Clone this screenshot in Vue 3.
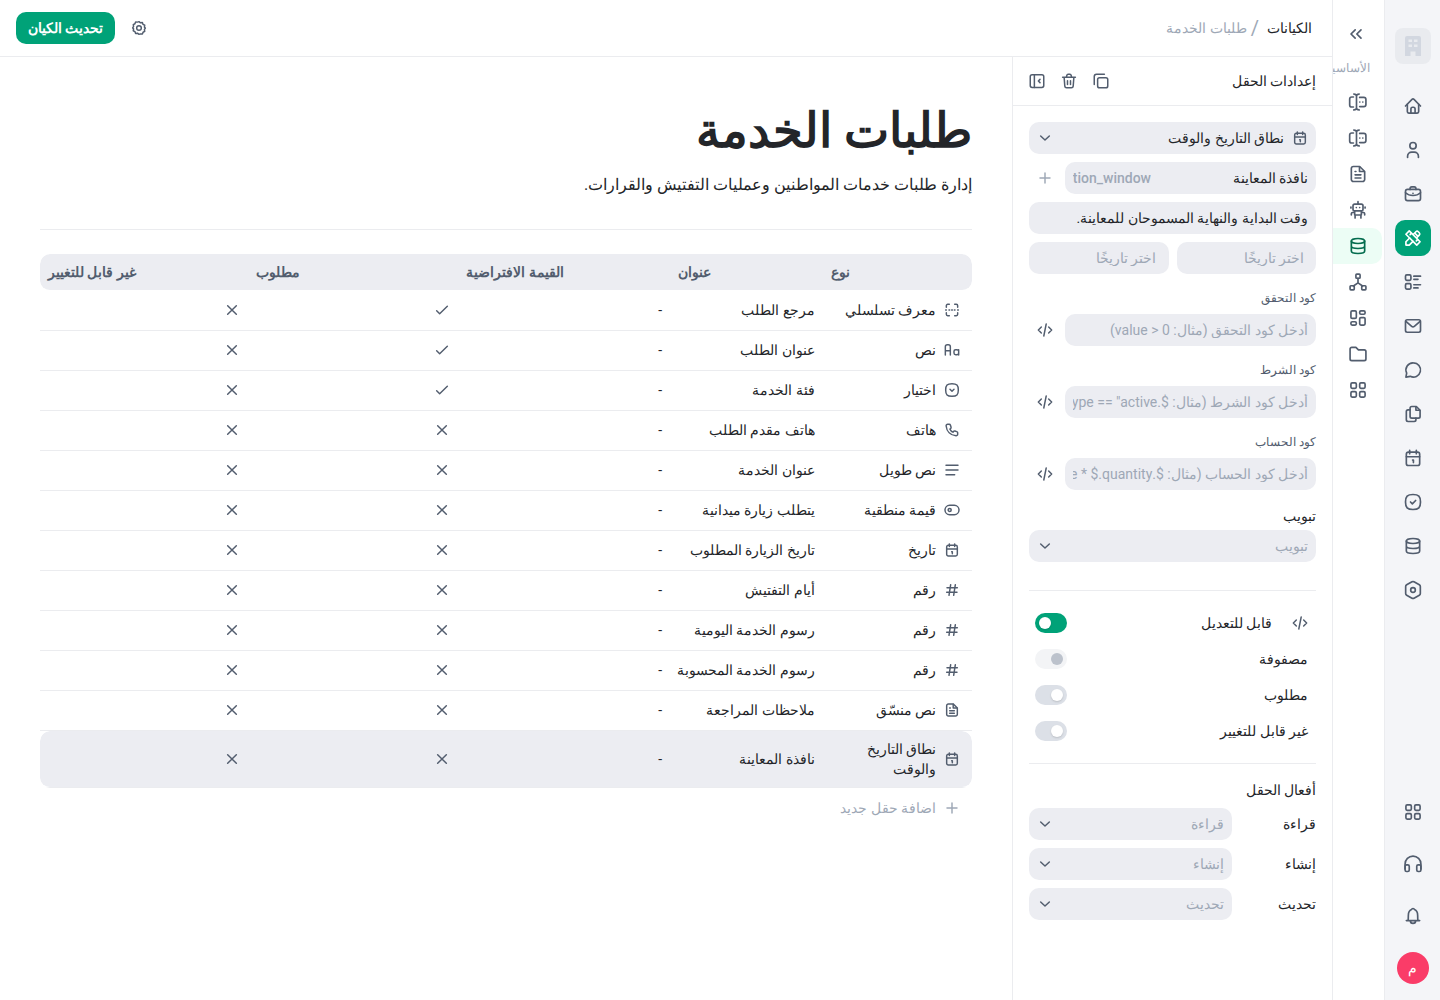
<script setup>
import { ref } from 'vue'

const icons = {
  home: '<path d="M3 12l7.8-7.9a1.7 1.7 0 0 1 2.4 0L21 12"/><path d="M5.2 10v8.6A1.9 1.9 0 0 0 7 20.500h10a1.900 1.900 0 0 0 1.800-1.900V10"/><path d="M9.500 20.500v-5a2 2 0 0 1 2-2h1a2 2 0 0 1 2 2v5"/>',
  user: '<circle cx="12" cy="6.800" r="3.800"/><path d="M5.500 21v-1.500a5 5 0 0 1 5-5h3a5 5 0 0 1 5 5V21"/>',
  briefcase: '<rect x="3" y="6.500" width="18" height="13.500" rx="2.500"/><path d="M8.500 6.500v-1A2 2 0 0 1 10.500 3.500h3a2 2 0 0 1 2 2v1M3 10.500c2.500 2.300 5.600 3.300 9 3.300s6.500-1 9-3.300M12 11.300v.1"/>',
  tools: '<path d="M3.500 7.500l4-4 13 13-4 4z"/><path d="M8 12l-4.500 4.500v4h4L12 16M12.500 7.500L15.500 4.500a2 2 0 0 1 2.800 0l1.200 1.200a2 2 0 0 1 0 2.800L16.500 11.500M14 6l4 4M10 6.500l-1.500 1.500M17.500 14L16 15.500"/>',
  list: '<rect x="3" y="3.500" width="6.500" height="6.500" rx="1.500"/><rect x="3" y="14" width="6.500" height="6.500" rx="1.500"/><path d="M13 5h8M13 8.800h5M13 15.300h8M13 19.100h5"/>',
  mail: '<rect x="3" y="4.500" width="18" height="15" rx="2"/><path d="M3.500 6.500l6.900 6a2.500 2.500 0 0 0 3.200 0l6.900-6"/>',
  chat: '<path d="M12.500 3.500a8.500 8.500 0 1 1-3.800 16.100L3.500 20.500l.9-4.800A8.500 8.500 0 0 1 12.500 3.500z"/>',
  files: '<path d="M10.500 3h5.500l4.500 4.500v7.500a2 2 0 0 1-2 2h-8a2 2 0 0 1-2-2V5a2 2 0 0 1 2-2z"/><path d="M15.500 3.300v4.200h4.500M8.500 7H6a2 2 0 0 0-2 2v10a2 2 0 0 0 2 2h7.500a2 2 0 0 0 2-2v-2"/>',
  calendar: '<rect x="4" y="5" width="16" height="16" rx="2.500"/><path d="M4 10.500h16M8 2.800v4M16 2.800v4M11.500 14.500h1v3"/>',
  check: '<path d="M12 3c6.800 0 9 2.200 9 9s-2.200 9-9 9-9-2.200-9-9 2.200-9 9-9z"/><path d="M9 12l2.200 2.200 4-4"/>',
  select: '<path d="M12 2.500c7.200 0 9.500 2.300 9.500 9.500s-2.300 9.500-9.500 9.500-9.500-2.300-9.500-9.500 2.300-9.500 9.500-9.500z"/><path d="M9 11l3 2.800 3-2.800"/>',
  database: '<ellipse cx="12" cy="6" rx="8" ry="3"/><path d="M4 6v12c0 1.800 3.600 3 8 3s8-1.200 8-3V6M4 12c0 1.800 3.600 3 8 3s8-1.200 8-3"/>',
  hexagon: '<path d="M10.800 2.200a2.400 2.400 0 0 1 2.400 0l6.400 3.600a2.400 2.400 0 0 1 1.200 2.100v8.200a2.400 2.400 0 0 1-1.200 2.100l-6.400 3.600a2.400 2.400 0 0 1-2.400 0l-6.400-3.600a2.400 2.400 0 0 1-1.200-2.100V7.900a2.400 2.400 0 0 1 1.200-2.100z"/><circle cx="12" cy="12" r="2.800"/>',
  grid: '<rect x="3.500" y="3.500" width="6.500" height="6.500" rx="1.500"/><rect x="14" y="3.500" width="6.500" height="6.500" rx="1.500"/><rect x="3.500" y="14" width="6.500" height="6.500" rx="1.500"/><rect x="14" y="14" width="6.500" height="6.500" rx="1.500"/>',
  headphones: '<path d="M2.500 18v-6a9.500 9.500 0 0 1 19 0v6"/><rect x="2.500" y="13" width="5" height="8" rx="1.800"/><rect x="16.500" y="13" width="5" height="8" rx="1.800"/>',
  bell: '<path d="M4 17.500h16M6 17.500c.4-1.300.4-3 .4-6 0-3.600 1.300-6.200 3.800-7.200a1.900 1.900 0 0 1 3.600 0c2.500 1 3.800 3.600 3.800 7.200 0 3 0 4.700.4 6M8.800 17.700a3.200 3.200 0 0 0 6.400 0"/>',
  collapse: '<path d="M11 7l-5 5 5 5M18 7l-5 5 5 5"/>',
  input: '<path d="M7 2.500c2 0 3.200.9 3.200 2.500v14c0 1.600-1.200 2.500-3.200 2.500M13.400 2.500c-2 0-3.200.9-3.200 2.500M13.400 21.500c-2 0-3.200-.9-3.200-2.500M6.500 6H4.500A2.500 2.500 0 0 0 2 8.500v7A2.500 2.500 0 0 0 4.500 18h2M14 6.500h5A2.500 2.500 0 0 1 21.500 9v6a2.500 2.500 0 0 1-2.500 2.500h-5M14.200 12v.1M17.800 12v.1"/>',
  document: '<path d="M6.500 3h7.500l6 6v9.500a2.500 2.500 0 0 1-2.500 2.500h-11A2.500 2.500 0 0 1 4 18.500v-13A2.500 2.500 0 0 1 6.500 3z"/><path d="M13.800 3.500V9h5.700M8.500 9h1M8.500 13h7M8.500 16.800h7"/>',
  robot: '<rect x="6" y="5" width="12" height="8" rx="2"/><path d="M12 2v3M10 9v.1M14 9v.1M3.500 8.500v1M20.500 8.500v1M8 13v5h8v-5M8 15H5.500A1.500 1.500 0 0 0 4 16.500V18M16 15h2.500a1.500 1.500 0 0 1 1.500 1.500V18M8.500 18v3.500M15.500 18v3.500"/>',
  network: '<rect x="9.500" y="2.500" width="5" height="5" rx="1"/><rect x="2.500" y="16.500" width="5" height="5" rx="1"/><rect x="16.500" y="16.500" width="5" height="5" rx="1"/><path d="M12 7.500V13l-5.500 3.800M12 13l5.500 3.800"/>',
  dashboard: '<rect x="3.500" y="3.500" width="6.500" height="9" rx="1.500"/><rect x="14" y="3.500" width="6.500" height="4" rx="1.500"/><rect x="3.500" y="16.500" width="6.500" height="4" rx="1.500"/><rect x="14" y="11.500" width="6.500" height="9" rx="1.500"/>',
  folder: '<path d="M2.500 6a2 2 0 0 1 2-2H9.500l3 3H19.500a2 2 0 0 1 2 2v9a2 2 0 0 1-2 2h-15a2 2 0 0 1-2-2z"/>',
  gear: '<path d="M12 2.500l2.300 1.700 2.800-.3 1 2.700 2.500 1.300-.5 2.800L21.500 12l-1.400 2.300.5 2.800-2.500 1.300-1 2.700-2.800-.3L12 21.500l-2.300-1.700-2.800.3-1-2.700-2.500-1.300.5-2.800L2.500 12l1.400-2.300-.5-2.800 2.500-1.300 1-2.700 2.800.3z"/><circle cx="12" cy="12" r="3.500"/>',
  copy: '<rect x="7.500" y="7.500" width="13.500" height="13.500" rx="2.500"/><path d="M16.500 3H6A3 3 0 0 0 3 6v10.500"/>',
  trash: '<path d="M3.500 7h17M5.500 7l.9 11.800A2.400 2.400 0 0 0 8.800 21h6.400a2.400 2.400 0 0 0 2.400-2.200L18.500 7M8.500 7l.6-2.600A1.800 1.800 0 0 1 10.800 3h2.400a1.800 1.800 0 0 1 1.700 1.400l.6 2.600M10 11.500v5M14 11.500v5"/>',
  panel: '<rect x="3" y="3.500" width="18" height="17" rx="2.500"/><path d="M8.500 3.500v17M16 9.800L13.800 12l2.200 2.200"/>',
  down: '<path d="M5.500 9l6.500 6 6.500-6"/>',
  plus: '<path d="M12 4.500v15M4.500 12h15"/>',
  code: '<path d="M6.500 7.500L2 12l4.500 4.500M17.500 7.500L22 12l-4.500 4.500M13.800 3l-3.600 18"/>',
  serial: '<path d="M3.500 8V5.500a2 2 0 0 1 2-2H8M16 3.500h2.500a2 2 0 0 1 2 2V8M20.500 16v2.500a2 2 0 0 1-2 2H16M8 20.500H5.500a2 2 0 0 1-2-2V16M2.500 12h1M7.500 12h1M11.500 12h1M15.500 12h1M20.500 12h1"/>',
  text: '<path d="M2 19.500V7a3 3 0 0 1 3-3h1.500a3 3 0 0 1 3 3v12.500M2 13h7.500M22 11.500v8M22 14a2.500 2.500 0 0 0-2.500-2.500h-2A2.500 2.500 0 0 0 15 14v2.500a2.500 2.500 0 0 0 2.500 2.500h2a2.500 2.500 0 0 0 2.500-2.500z"/>',
  phone: '<path d="M5.500 3.500h2.300a2 2 0 0 1 1.900 1.400l.9 2.800a2 2 0 0 1-.8 2.200l-.9.700c1 2.100 2.400 3.600 4.500 4.700l.8-1.100a2 2 0 0 1 2.200-.7l2.700.9A2 2 0 0 1 20.500 16v2.300a2.300 2.300 0 0 1-2.500 2.300C9.800 19.900 4 14.200 3.200 6a2.300 2.300 0 0 1 2.300-2.500z"/>',
  lines: '<path d="M3 5h18M3 12h18M3 19h13"/>',
  toggle: '<rect x="1.500" y="5" width="21" height="14" rx="7"/><circle cx="8.500" cy="12" r="2.300"/>',
  hash: '<path d="M10 4L7.500 20M17 4l-2.500 16M4.500 8.500h15.500M4 15.500h15.500"/>',
  tick: '<path d="M4 13l4.500 4.500L20 6.500"/>',
  cross: '<path d="M5.500 5.500l13 13M18.500 5.500l-13 13"/>',
}

const railItems = [
  { icon: 'home', label: 'الرئيسية' },
  { icon: 'user', label: 'المستخدمون' },
  { icon: 'briefcase', label: 'الأعمال' },
  { icon: 'tools', label: 'البناء', active: true },
  { icon: 'list', label: 'القوائم' },
  { icon: 'mail', label: 'البريد' },
  { icon: 'chat', label: 'المحادثات' },
  { icon: 'files', label: 'الملفات' },
  { icon: 'calendar', label: 'التقويم' },
  { icon: 'check', label: 'المهام' },
  { icon: 'database', label: 'البيانات' },
  { icon: 'hexagon', label: 'الإعدادات' },
]
const railFooter = [
  { icon: 'grid', label: 'التطبيقات' },
  { icon: 'headphones', label: 'الدعم' },
  { icon: 'bell', label: 'الإشعارات' },
]
const sections = [
  { icon: 'input', label: 'المدخلات' },
  { icon: 'input', label: 'الحقول' },
  { icon: 'document', label: 'المستندات' },
  { icon: 'robot', label: 'المساعد' },
  { icon: 'database', label: 'الكيانات', active: true },
  { icon: 'network', label: 'سير العمل' },
  { icon: 'dashboard', label: 'اللوحات' },
  { icon: 'folder', label: 'المجلدات' },
  { icon: 'grid', label: 'الوحدات' },
]
const tools = [
  { icon: 'copy', label: 'نسخ' },
  { icon: 'trash', label: 'حذف' },
  { icon: 'panel', label: 'طي اللوحة' },
]
const codes = [
  { id: 'validation', label: 'كود التحقق', hint: 'أدخل كود التحقق (مثال: value > 0)' },
  { id: 'condition', label: 'كود الشرط', hint: 'أدخل كود الشرط (مثال: $.type == "active")' },
  { id: 'computation', label: 'كود الحساب', hint: 'أدخل كود الحساب (مثال: $.price * $.quantity)' },
]
const flags = ref([
  { id: 'editable', label: 'قابل للتعديل', on: true, code: true },
  { id: 'array', label: 'مصفوفة', on: false, disabled: true },
  { id: 'required', label: 'مطلوب', on: false },
  { id: 'immutable', label: 'غير قابل للتغيير', on: false },
])
const actions = [
  { id: 'read', label: 'قراءة' },
  { id: 'create', label: 'إنشاء' },
  { id: 'update', label: 'تحديث' },
]
const columns = ['نوع', 'عنوان', 'القيمة الافتراضية', 'مطلوب', 'غير قابل للتغيير']
const fields = [
  { icon: 'serial', type: 'معرف تسلسلي', title: 'مرجع الطلب', required: true },
  { icon: 'text', type: 'نص', title: 'عنوان الطلب', required: true },
  { icon: 'select', type: 'اختيار', title: 'فئة الخدمة', required: true },
  { icon: 'phone', type: 'هاتف', title: 'هاتف مقدم الطلب' },
  { icon: 'lines', type: 'نص طويل', title: 'عنوان الخدمة' },
  { icon: 'toggle', type: 'قيمة منطقية', title: 'يتطلب زيارة ميدانية' },
  { icon: 'calendar', type: 'تاريخ', title: 'تاريخ الزيارة المطلوب' },
  { icon: 'hash', type: 'رقم', title: 'أيام التفتيش' },
  { icon: 'hash', type: 'رقم', title: 'رسوم الخدمة اليومية' },
  { icon: 'hash', type: 'رقم', title: 'رسوم الخدمة المحسوبة' },
  { icon: 'document', type: 'نص منسّق', title: 'ملاحظات المراجعة' },
  { icon: 'calendar', type: 'نطاق التاريخ والوقت', title: 'نافذة المعاينة', selected: true },
]

const fieldTitle = ref('نافذة المعاينة')
const fieldKey = ref('inspection_window')
const fieldNote = ref('وقت البداية والنهاية المسموحان للمعاينة.')
</script>

<template>
  <div class="app" dir="rtl" lang="ar">
    <nav class="rail" aria-label="التنقل الرئيسي">
      <div class="workspace">
        <svg viewBox="0 0 24 24" aria-hidden="true">
          <path fill-rule="evenodd" d="M6 2h12a2 2 0 0 1 2 2v18h-5.500v-4.500h-5V22H4V4a2 2 0 0 1 2-2zm1.500 3.500V8H11V5.500zm5.500 0V8h3.500V5.500zM7.500 10.500V13H11v-2.500zm5.500 0V13h3.500v-2.500z" />
        </svg>
      </div>
      <a v-for="item in railItems" :key="item.icon" href="#" class="rail-link" :class="{ active: item.active }" :aria-label="item.label">
        <svg class="icon large" viewBox="0 0 24 24" v-html="icons[item.icon]"></svg>
      </a>
      <div class="rail-footer">
        <button v-for="item in railFooter" :key="item.icon" type="button" class="rail-link" :aria-label="item.label">
          <svg class="icon large" viewBox="0 0 24 24" v-html="icons[item.icon]"></svg>
        </button>
        <button type="button" class="rail-link"><span class="avatar">م</span></button>
      </div>
    </nav>

    <nav class="sections" aria-label="الأقسام">
      <button type="button" class="collapse" aria-label="توسيع القائمة">
        <svg class="icon large" viewBox="0 0 24 24" v-html="icons.collapse"></svg>
      </button>
      <p class="section-label">الأساسية</p>
      <a v-for="item in sections" :key="item.label" href="#" class="section-link" :class="{ active: item.active }" :aria-label="item.label">
        <svg class="icon large" viewBox="0 0 24 24" v-html="icons[item.icon]"></svg>
      </a>
    </nav>

    <div class="workarea">
      <header class="topbar">
        <div class="crumbs">
          <a href="#">الكيانات</a>
          <span class="slash">/</span>
          <span class="current">طلبات الخدمة</span>
        </div>
        <div class="topbar-actions">
          <button type="button" class="ghost" aria-label="إعدادات الكيان">
            <svg class="icon small" viewBox="0 0 24 24" v-html="icons.gear"></svg>
          </button>
          <button type="button" class="primary">تحديث الكيان</button>
        </div>
      </header>

      <div class="columns">
        <aside class="settings">
          <div class="settings-head">
            <h2>إعدادات الحقل</h2>
            <div class="tools">
              <button v-for="tool in tools" :key="tool.icon" type="button" class="ghost" :aria-label="tool.label">
                <svg class="icon" viewBox="0 0 24 24" v-html="icons[tool.icon]"></svg>
              </button>
            </div>
          </div>

          <form class="settings-body" @submit.prevent>
            <div class="stack">
              <div class="dropdown with-icon">
                <svg class="icon small lead" viewBox="0 0 24 24" v-html="icons.calendar"></svg>
                <select aria-label="نوع الحقل"><option>نطاق التاريخ والوقت</option></select>
                <svg class="icon small chevron" viewBox="0 0 24 24" v-html="icons.down"></svg>
              </div>
              <div class="line">
                <div class="pair">
                  <input v-model="fieldTitle" type="text" class="pair-title" aria-label="عنوان الحقل" />
                  <input v-model="fieldKey" type="text" class="pair-key" aria-label="مفتاح الحقل" />
                </div>
                <button type="button" class="ghost faint" aria-label="إضافة ترجمة">
                  <svg class="icon small" viewBox="0 0 24 24" v-html="icons.plus"></svg>
                </button>
              </div>
              <input v-model="fieldNote" type="text" class="box" aria-label="وصف الحقل" />
              <div class="dates">
                <input type="text" class="box date" placeholder="اختر تاريخًا" aria-label="تاريخ البداية" />
                <input type="text" class="box date" placeholder="اختر تاريخًا" aria-label="تاريخ النهاية" />
              </div>
            </div>

            <div v-for="code in codes" :key="code.id" class="code-field">
              <label :for="code.id">{{ code.label }}</label>
              <div class="line">
                <input :id="code.id" type="text" class="box" :placeholder="code.hint" />
                <button type="button" class="ghost" aria-label="فتح محرر الكود">
                  <svg class="icon small" viewBox="0 0 24 24" v-html="icons.code"></svg>
                </button>
              </div>
            </div>

            <div class="tab-field">
              <label for="tab">تبويب</label>
              <div class="dropdown empty">
                <select id="tab"><option>تبويب</option></select>
                <svg class="icon small chevron" viewBox="0 0 24 24" v-html="icons.down"></svg>
              </div>
            </div>

            <div class="flags">
              <div v-for="flag in flags" :key="flag.id" class="flag">
                <button v-if="flag.code" type="button" class="flag-code" aria-label="شرط التعديل">
                  <svg class="icon small" viewBox="0 0 24 24" v-html="icons.code"></svg>
                </button>
                <label :for="flag.id">{{ flag.label }}</label>
                <input :id="flag.id" v-model="flag.on" type="checkbox" class="switch" :disabled="flag.disabled" />
              </div>
            </div>

            <section class="actions">
              <h3>أفعال الحقل</h3>
              <div v-for="action in actions" :key="action.id" class="action">
                <label :for="action.id">{{ action.label }}</label>
                <div class="dropdown empty">
                  <select :id="action.id"><option>{{ action.label }}</option></select>
                  <svg class="icon small chevron" viewBox="0 0 24 24" v-html="icons.down"></svg>
                </div>
              </div>
            </section>
          </form>
        </aside>

        <main class="content">
          <h1>طلبات الخدمة</h1>
          <p class="summary">إدارة طلبات خدمات المواطنين وعمليات التفتيش والقرارات.</p>
          <table>
            <thead>
              <tr><th v-for="name in columns" :key="name" scope="col">{{ name }}</th></tr>
            </thead>
            <tbody>
              <tr v-for="field in fields" :key="field.title" :class="{ selected: field.selected }">
                <td>
                  <div class="type">
                    <svg class="icon small" viewBox="0 0 24 24" v-html="icons[field.icon]"></svg>
                    <span>{{ field.type }}</span>
                  </div>
                </td>
                <td>{{ field.title }}</td>
                <td>-</td>
                <td><svg class="icon small" viewBox="0 0 24 24" v-html="field.required ? icons.tick : icons.cross"></svg></td>
                <td><svg class="icon small" viewBox="0 0 24 24" v-html="icons.cross"></svg></td>
              </tr>
            </tbody>
          </table>
          <button type="button" class="add">
            <svg class="icon small" viewBox="0 0 24 24" v-html="icons.plus"></svg>
            <span>اضافة حقل جديد</span>
          </button>
        </main>
      </div>
    </div>
  </div>
</template>

<style>
body {
  margin: 0;
  background: #fff;
}
</style>

<style scoped>
.app {
  --ink: #232529;
  --slate: #525d6e;
  --muted: #9ea8b6;
  --fill: #ecedf2;
  --line: #ebecef;
  --green: #00a278;
  display: flex;
  min-height: 100vh;
  font: 14px/20px Roboto, 'Noto Sans', sans-serif;
  color: var(--ink);
}
.app *,
.app *::before {
  box-sizing: border-box;
}
h1,
h2,
h3,
p {
  margin: 0;
}
button,
input,
select {
  font: inherit;
  color: inherit;
  border: 0;
  margin: 0;
  padding: 0;
  background: none;
}
button {
  cursor: pointer;
}
a {
  color: inherit;
  text-decoration: none;
}
.icon {
  display: block;
  flex: none;
  width: 18px;
  height: 18px;
  fill: none;
  stroke: currentColor;
  stroke-width: 2;
  stroke-linecap: round;
  stroke-linejoin: round;
  color: var(--slate);
}
.icon.large {
  width: 20px;
  height: 20px;
}
.icon.small {
  width: 16px;
  height: 16px;
  stroke-width: 2.2;
}

.rail {
  flex: none;
  width: 56px;
  display: flex;
  flex-direction: column;
  align-items: center;
  gap: 8px;
  padding: 28px 0 14px;
  border-left: 1px solid var(--line);
  background: #f4f5f8;
}
.workspace {
  width: 36px;
  height: 36px;
  margin-bottom: 16px;
  display: grid;
  place-items: center;
  border-radius: 8px;
  background: #e9ebef;
}
.workspace svg {
  width: 24px;
  height: 24px;
  fill: #d2d7e0;
}
.rail-link {
  width: 36px;
  height: 36px;
  display: grid;
  place-items: center;
  border-radius: 10px;
}
.rail-link.active {
  background: var(--green);
}
.rail-link.active .icon {
  color: #fff;
}
.rail-footer {
  margin-top: auto;
  display: flex;
  flex-direction: column;
  align-items: center;
  gap: 16px;
}
.avatar {
  width: 32px;
  height: 32px;
  display: grid;
  place-items: center;
  border-radius: 50%;
  background: #fa3c68;
  color: #fff;
}

.sections {
  flex: none;
  width: 52px;
  padding-top: 20px;
  border-left: 1px solid var(--line);
  overflow: hidden;
}
.collapse {
  width: 56px;
  height: 28px;
  display: grid;
  place-items: center;
}
.section-label {
  height: 36px;
  padding: 12px 14px 0 0;
  line-height: 16px;
  font-size: 12px;
  white-space: nowrap;
  color: var(--muted);
}
.section-link {
  height: 36px;
  margin-right: 2px;
  display: grid;
  place-items: center;
  border-radius: 0 10px 10px 0;
}
.section-link.active {
  background: #ecfdf5;
}
.section-link.active .icon {
  color: #046c4e;
}

.workarea {
  flex: 1;
  min-width: 0;
  display: flex;
  flex-direction: column;
}
.topbar {
  height: 57px;
  display: flex;
  align-items: center;
  justify-content: space-between;
  padding: 0 20px 0 16px;
  border-bottom: 1px solid var(--line);
}
.crumbs {
  display: flex;
  align-items: center;
  gap: 4px;
  font-weight: 500;
}
.slash {
  margin-right: 4px;
  font-size: 20px;
  font-weight: 400;
  color: var(--muted);
}
.current {
  font-weight: 400;
  color: var(--muted);
}
.topbar-actions {
  display: flex;
  gap: 8px;
}
.ghost {
  flex: none;
  width: 32px;
  height: 32px;
  display: grid;
  place-items: center;
}
.ghost.faint .icon {
  color: var(--muted);
}
.primary {
  height: 32px;
  padding: 0 12px;
  border-radius: 10px;
  background: var(--green);
  color: #fff;
  font-weight: 600;
}
.columns {
  flex: 1;
  display: flex;
}

.settings {
  flex: none;
  width: 320px;
  border-left: 1px solid var(--line);
}
.settings-head {
  height: 49px;
  display: flex;
  align-items: center;
  justify-content: space-between;
  padding: 0 16px 0 8px;
  border-bottom: 1px solid var(--line);
}
h2,
h3 {
  font-size: 14px;
  font-weight: 500;
}
.tools {
  display: flex;
}
.settings-body {
  padding: 16px;
}
.stack {
  display: flex;
  flex-direction: column;
  gap: 8px;
}
.line {
  display: flex;
  gap: 4px;
}
.box,
.pair,
.dropdown {
  flex: 1;
  width: 100%;
  min-width: 0;
  height: 32px;
  flex-basis: auto;
  border-radius: 10px;
  background: var(--fill);
}
.box {
  padding: 0 8px;
}
.box::placeholder {
  color: var(--muted);
  opacity: 1;
}
.box.date {
  padding: 0 12px;
}
.pair {
  display: flex;
  gap: 4px;
  padding: 0 8px;
}
.pair-title {
  flex: 1;
  min-width: 0;
}
.pair-key {
  width: 78px;
  font-weight: 500;
  color: var(--muted);
}
.dates {
  display: flex;
  gap: 8px;
}
.dropdown {
  position: relative;
}
.dropdown select {
  appearance: none;
  width: 100%;
  height: 32px;
  padding: 0 8px 0 32px;
}
.dropdown.with-icon select {
  padding-right: 32px;
}
.dropdown.empty select {
  color: var(--muted);
}
.lead,
.chevron {
  position: absolute;
  top: 8px;
  pointer-events: none;
}
.lead {
  right: 8px;
}
.chevron {
  left: 8px;
}
.code-field {
  margin-top: 16px;
}
.code-field label {
  display: block;
  margin-bottom: 8px;
  font-size: 12px;
  line-height: 16px;
  color: var(--slate);
}
.tab-field {
  margin-top: 16px;
}
.tab-field label {
  display: block;
  margin-bottom: 4px;
  font-weight: 500;
}
.flags {
  margin: 28px 0 16px;
  padding: 14px 0;
  border: solid var(--line);
  border-width: 1px 0;
}
.flag {
  height: 36px;
  display: flex;
  align-items: center;
  padding: 0 8px 0 6px;
}
.flag-code {
  margin-left: 20px;
}
.switch {
  appearance: none;
  width: 32px;
  height: 20px;
  margin-right: auto;
  padding: 4px;
  border-radius: 10px;
  background: #dce0e7;
  cursor: pointer;
}
.switch::before {
  content: '';
  display: block;
  width: 12px;
  height: 12px;
  border-radius: 50%;
  background: #fff;
  box-shadow: 0 1px 2px rgb(0 0 0 / 15%);
}
.switch:checked {
  background: var(--green);
}
.switch:checked::before {
  margin-right: 12px;
}
.switch:disabled {
  background: #f3f4f6;
}
.switch:disabled::before {
  background: #bcc2cc;
  box-shadow: none;
}
.actions {
  display: flex;
  flex-direction: column;
  gap: 8px;
}
.action {
  display: flex;
  align-items: center;
}
.action label {
  flex: none;
  width: 84px;
  font-weight: 500;
}

.content {
  flex: 1;
  min-width: 0;
  padding: 40px;
}
h1 {
  font-size: 48px;
  line-height: 68px;
  font-weight: 700;
}
.summary {
  margin-bottom: 24px;
  padding: 8px 0 32px;
  border-bottom: 1px solid var(--line);
  font-size: 16px;
  line-height: 24px;
}
table {
  width: 100%;
  table-layout: fixed;
  border-spacing: 0;
}
th {
  height: 37px;
  padding: 0 8px;
  border-bottom: 1px solid transparent;
  background: var(--fill) padding-box;
  color: var(--slate);
  font-weight: 600;
  text-align: left;
}
th:first-child {
  width: 16%;
  border-radius: 0 10px 10px 0;
}
th:nth-child(2) {
  width: 16.4%;
}
th:nth-child(3) {
  width: 22.7%;
}
th:nth-child(4) {
  width: 22.6%;
}
th:last-child {
  border-radius: 10px 0 0 10px;
}
tbody tr {
  background: linear-gradient(var(--line), var(--line)) bottom / 100% 1px no-repeat;
}
td {
  padding: 9px 8px 10px;
  border-bottom: 1px solid transparent;
  background-clip: padding-box;
}
td:first-child {
  padding-right: 12px;
  padding-left: 12px;
}
td:nth-child(2) {
  white-space: nowrap;
}
.selected td {
  padding-top: 8px;
  padding-bottom: 8px;
  background-color: var(--fill);
}
.selected td:first-child {
  border-radius: 0 10px 10px 0;
}
.selected td:last-child {
  border-radius: 10px 0 0 10px;
}
.type {
  display: flex;
  align-items: center;
  gap: 8px;
}
.add {
  height: 40px;
  display: flex;
  align-items: center;
  gap: 8px;
  padding: 0 12px;
  color: var(--muted);
}
.add .icon {
  color: var(--muted);
}
</style>
